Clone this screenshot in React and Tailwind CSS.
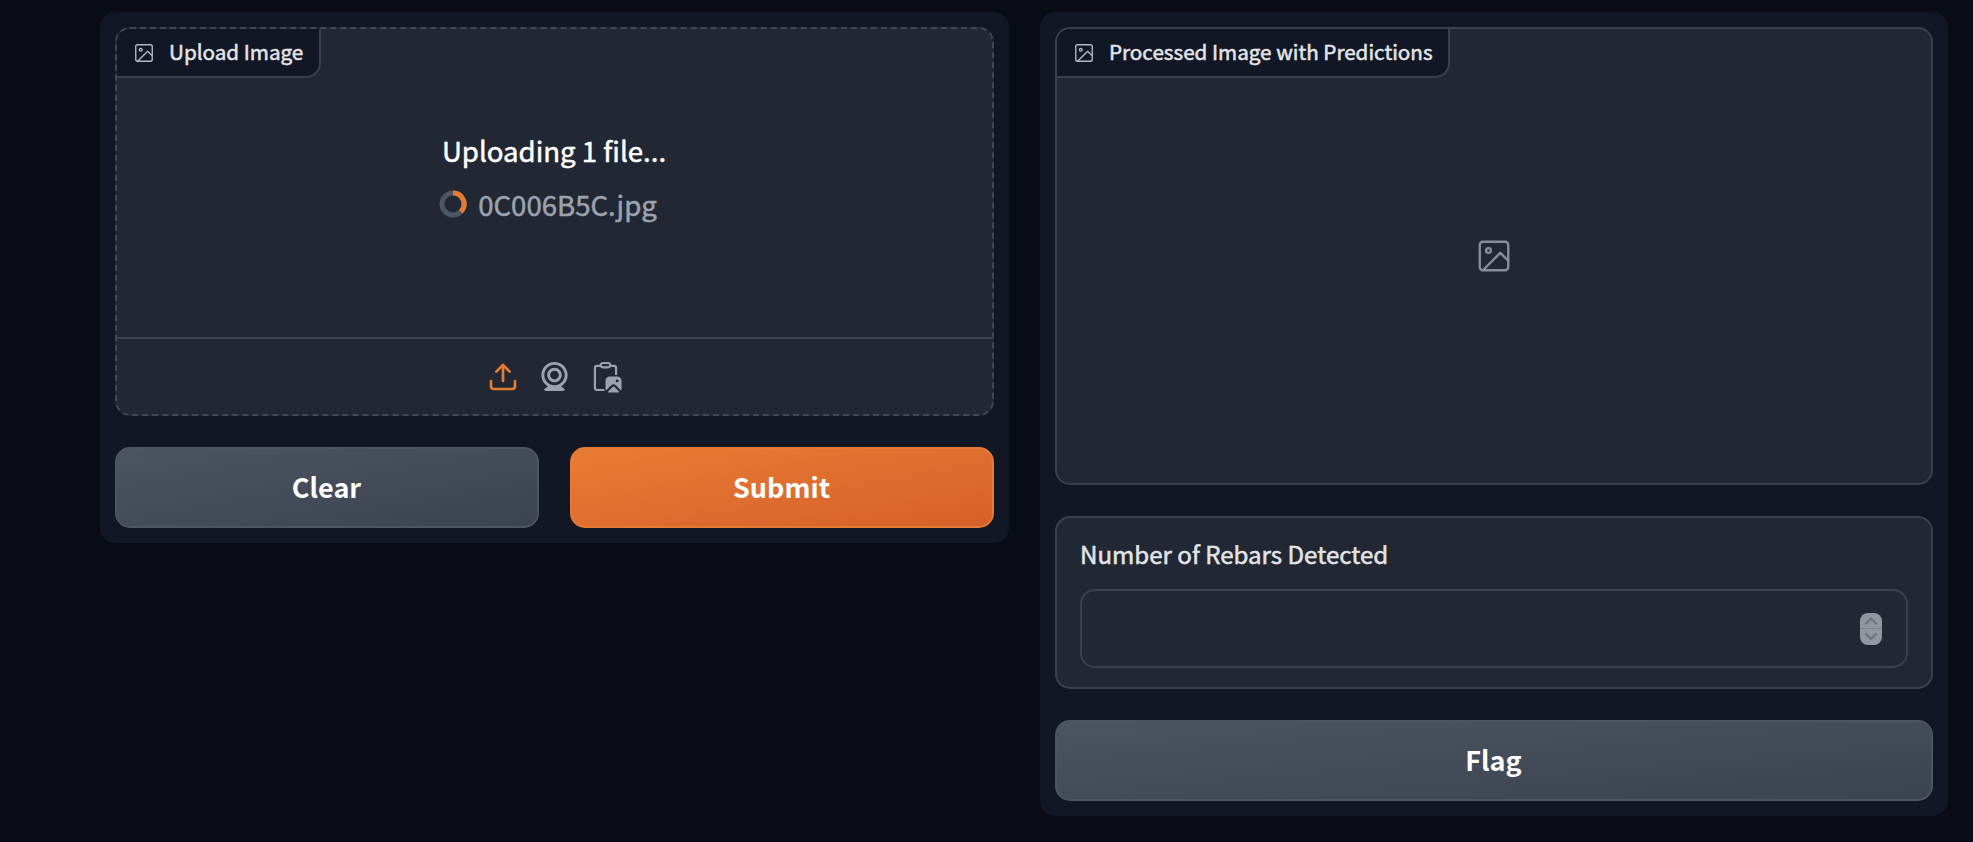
import React from "react";

const boxBorder = "border-2 border-[#37424e]";

function ImageIcon({ className }) {
  return (
    <svg viewBox="0 0 24 24" fill="none" stroke="currentColor" strokeWidth="1.5" strokeLinecap="round" strokeLinejoin="round" className={className}>
      <rect x="3" y="3" width="18" height="18" rx="2" />
      <circle cx="8.5" cy="8.5" r="1.5" />
      <polyline points="21 15 16 10 5 21" />
    </svg>
  );
}

function UploadIcon() {
  return (
    <svg viewBox="0 0 24 24" fill="none" stroke="currentColor" strokeWidth="2" strokeLinecap="round" strokeLinejoin="round" className="size-8 text-[#e47a33]">
      <path d="M21 15v4a2 2 0 0 1-2 2H5a2 2 0 0 1-2-2v-4" />
      <polyline points="17 8 12 3 7 8" />
      <line x1="12" y1="3" x2="12" y2="15" />
    </svg>
  );
}

function WebcamIcon() {
  return (
    <svg viewBox="0 0 24 24" fill="currentColor" className="size-[35px]">
      <path d="M12 2c-4.963 0-9 4.038-9 9c0 3.328 1.82 6.232 4.513 7.79l-2.067 1.378A1 1 0 0 0 6 22h12a1 1 0 0 0 .555-1.832l-2.067-1.378C19.18 17.232 21 14.328 21 11c0-4.962-4.037-9-9-9zm0 16c-3.859 0-7-3.141-7-7c0-3.86 3.141-7 7-7s7 3.14 7 7c0 3.859-3.141 7-7 7z" />
      <path d="M12 6c-2.757 0-5 2.243-5 5s2.243 5 5 5s5-2.243 5-5s-2.243-5-5-5zm0 8c-1.654 0-3-1.346-3-3s1.346-3 3-3s3 1.346 3 3s-1.346 3-3 3z" />
    </svg>
  );
}

function PasteIcon() {
  return (
    <svg viewBox="0 0 24 24" fill="currentColor" className="size-[35px]">
      <path fillRule="evenodd" d="M13.75 2a2.25 2.25 0 0 1 2.236 2H17.75A2.25 2.25 0 0 1 20 6.25V11h-1.5V6.25a.75.75 0 0 0-.75-.75h-2.129c-.404.603-1.091 1-1.871 1h-3.5c-.78 0-1.467-.397-1.871-1H6.25a.75.75 0 0 0-.75.75v13.5c0 .414.336.75.75.75h4.78a3.99 3.99 0 0 0 .505 1.5H6.25A2.25 2.25 0 0 1 4 19.75V6.25A2.25 2.25 0 0 1 6.25 4h1.764a2.25 2.25 0 0 1 2.236-2zM13.75 3.5h-3.5a.75.75 0 0 0 0 1.5h3.5a.75.75 0 0 0 0-1.5z" />
      <path fillRule="evenodd" d="M15 12a3 3 0 0 0-3 3v5c0 .556.151 1.077.415 1.524l3.494-3.494a2.25 2.25 0 0 1 3.182 0l3.494 3.494c.264-.447.415-.968.415-1.524v-5a3 3 0 0 0-3-3zM20 16a1 1 0 1 1 0-2 1 1 0 0 1 0 2z" />
      <path d="M15 23a2.985 2.985 0 0 1-1.524-.415l3.494-3.494a.75.75 0 0 1 1.06 0l3.494 3.494A2.985 2.985 0 0 1 20 23z" />
    </svg>
  );
}

function Spinner() {
  return (
    <svg viewBox="0 0 28 28" fill="none" strokeWidth="5" className="size-7 shrink-0">
      <circle cx="14" cy="14" r="11" stroke="#4b5563" />
      <path d="M14 3A11 11 0 0 1 21.8 21.8" stroke="#e47a33" />
    </svg>
  );
}

function BlockLabel({ children, className }) {
  return (
    <div className={`flex h-[49px] items-center gap-[14px] self-start rounded-br-[15px] border-r-2 border-b-2 border-[#37424e] bg-[#111725] pl-[16px] leading-none whitespace-nowrap text-[#e3e5e9] ${className}`}>
      <ImageIcon className="mt-px size-[22px] shrink-0 text-[#b4b8bf]" />
      <span className="pb-0.5 text-[20.65px] [-webkit-text-stroke:0.5px_currentColor]">{children}</span>
    </div>
  );
}

function Button({ children, className }) {
  return (
    <button className={`flex h-[81px] flex-1 items-center justify-center rounded-[15px] border-2 pr-px pb-[3px] text-[27px] leading-none font-bold text-white ${className}`}>
      {children}
    </button>
  );
}

const secondary = "border-[#4c5562] bg-linear-to-br from-[#4c545f] to-[#3b4351]";

export default function App() {
  return (
    <div className="flex h-[842px] w-[1973px] items-start gap-[31px] overflow-hidden bg-[#090c14] pt-[12px] pl-[100px] font-['Noto_Sans_CJK_SC','Noto_Sans',sans-serif]">
      <section className="flex w-[909px] flex-col gap-[31px] rounded-[15px] bg-[#111725] p-[15px]">
        <div className="flex h-[389px] flex-col overflow-hidden rounded-[15px] border-2 border-dashed border-[#404854] bg-[#212834]">
          <BlockLabel className="w-[204px]">Upload Image</BlockLabel>
          <div className="flex flex-1 flex-col pt-[45px] text-[27.6px] leading-[54px] [-webkit-text-stroke:0.5px_currentColor]">
            <div className="self-center pr-px text-white">Uploading 1 file...</div>
            <div className="flex items-center gap-[11px] self-center pr-[13px] text-[#9ca3af]">
              <Spinner />
              <span>0C006B5C.jpg</span>
            </div>
          </div>
          <div className="flex h-[77px] items-center justify-center border-t-2 border-[#37424e] text-[#9ca3af]">
            <UploadIcon />
            <span className="mr-4 ml-[18px]">
              <WebcamIcon />
            </span>
            <PasteIcon />
          </div>
        </div>
        <div className="flex gap-[31px]">
          <Button className={secondary}>Clear</Button>
          <Button className="border-[#e47a33] bg-linear-to-br from-[#e97c34] to-[#d6602a]">Submit</Button>
        </div>
      </section>

      <section className="flex w-[908px] flex-col gap-[31px] rounded-[15px] bg-[#111725] p-[15px]">
        <div className={`relative flex h-[458px] flex-col overflow-hidden rounded-[15px] bg-[#212834] ${boxBorder}`}>
          <BlockLabel className="w-[393px]">Processed Image with Predictions</BlockLabel>
          <div className="absolute inset-0 flex items-center justify-center">
            <ImageIcon className="size-[38px] text-[#888e98]" />
          </div>
        </div>
        <div className={`flex h-[173px] flex-col rounded-[15px] bg-[#212834] px-[23px] pt-[19px] ${boxBorder}`}>
          <label className="h-[52px] text-[24.1px] leading-[34px] text-[#e3e5e9] [-webkit-text-stroke:0.5px_currentColor]">Number of Rebars Detected</label>
          <div className={`flex h-[79px] items-center justify-end rounded-[15px] pr-[24px] ${boxBorder}`}>
            <svg viewBox="0 0 22 32" fill="none" className="mt-px h-8 w-[22px]">
              <rect width="22" height="32" rx="8" fill="#92969e" />
              <path d="M0 15.5h22" stroke="#80848b" />
              <path d="M6 10.5l5-5 5 5M6 21l5 5 5-5" stroke="#70747b" strokeWidth="2.2" strokeLinecap="round" strokeLinejoin="round" />
            </svg>
          </div>
        </div>
        <div className="flex">
          <Button className={secondary}>Flag</Button>
        </div>
      </section>
    </div>
  );
}
